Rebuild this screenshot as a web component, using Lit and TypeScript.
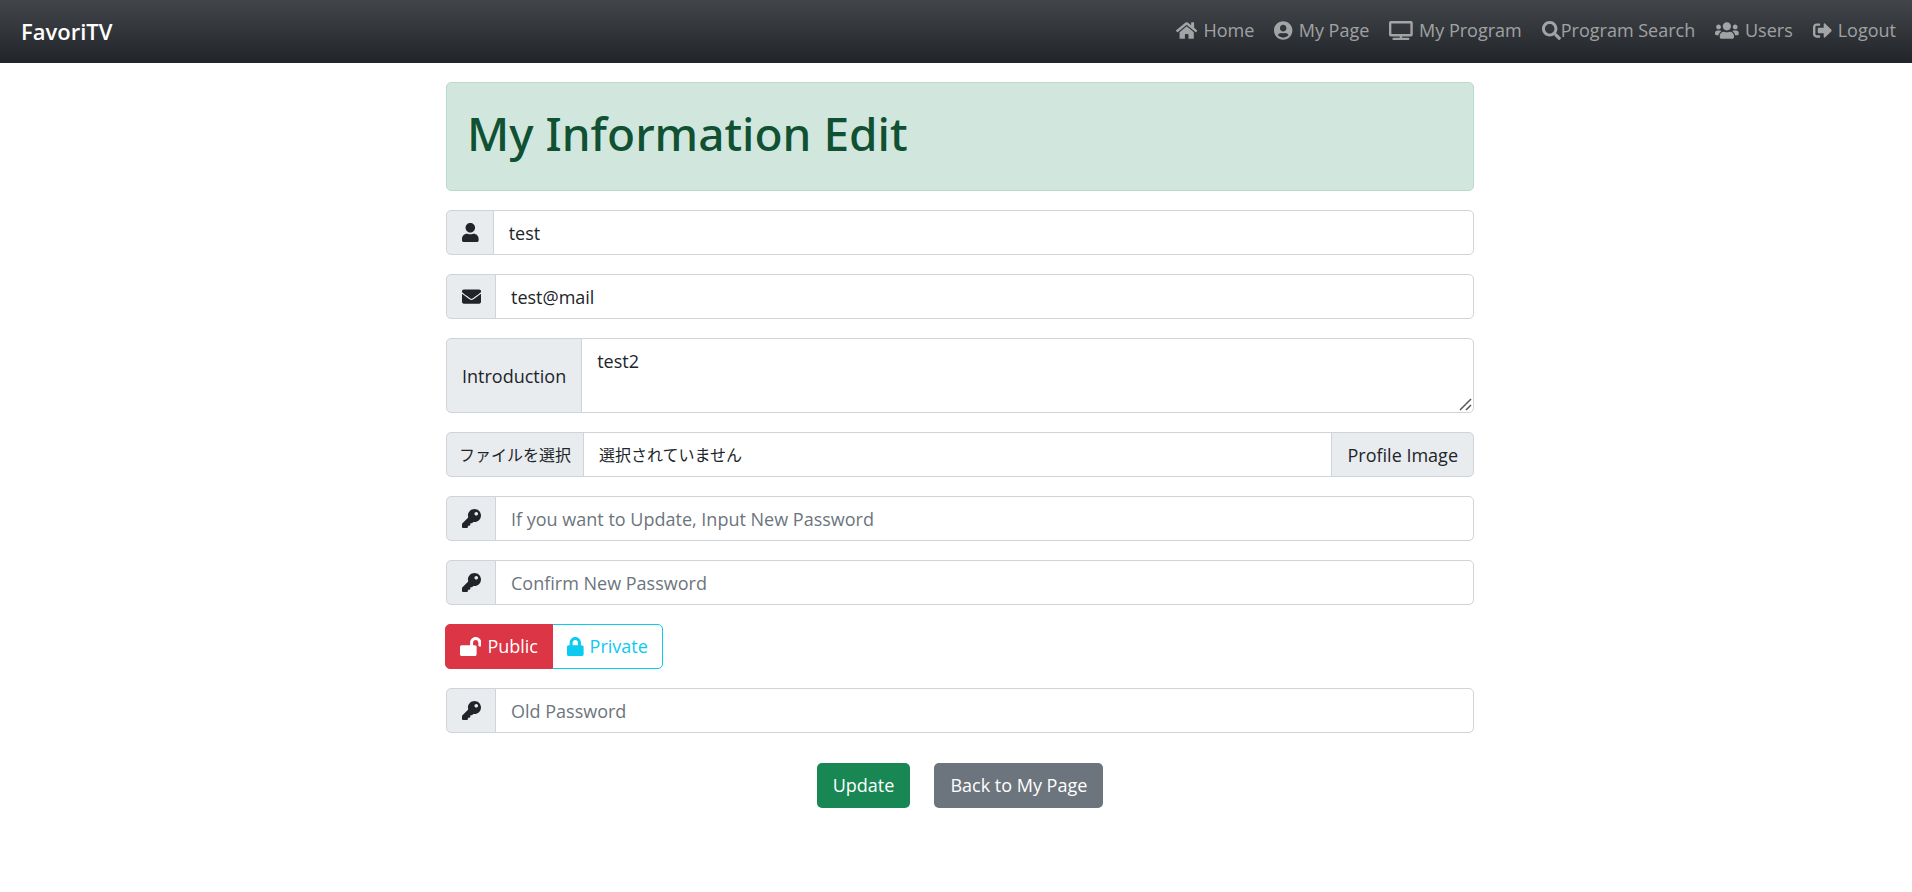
import { LitElement, html, css, svg } from "lit";
import { customElement, property, state } from "lit/decorators.js";

const ICONS: Record<string, [number, string]> = {
  home: [576, "M280.37 148.26L96 300.11V464a16 16 0 0 0 16 16l112.06-.29a16 16 0 0 0 15.92-16V368a16 16 0 0 1 16-16h64a16 16 0 0 1 16 16v95.64a16 16 0 0 0 16 16.05L464 480a16 16 0 0 0 16-16V300L295.67 148.26a12.19 12.19 0 0 0-15.3 0zM571.6 251.47L488 182.56V44.05a12 12 0 0 0-12-12h-56a12 12 0 0 0-12 12v72.61L318.47 43a48 48 0 0 0-61 0L4.34 251.47a12 12 0 0 0-1.6 16.9l25.5 31A12 12 0 0 0 45.15 301l235.22-193.74a12.19 12.19 0 0 1 15.3 0L530.9 301a12 12 0 0 0 16.9-1.6l25.5-31a12 12 0 0 0-1.7-16.93z"],
  account: [496, "M248 8C111 8 0 119 0 256s111 248 248 248 248-111 248-248S385 8 248 8zm0 96c48.6 0 88 39.4 88 88s-39.4 88-88 88-88-39.4-88-88 39.4-88 88-88zm0 344c-58.7 0-111.3-26.6-146.5-68.2 18.8-35.4 55.6-59.8 98.5-59.8 2.4 0 4.8.4 7.1 1.1 13 4.2 26.6 6.9 40.9 6.9 14.3 0 28-2.7 40.9-6.9 2.3-.7 4.7-1.1 7.1-1.1 42.9 0 79.7 24.4 98.5 59.8C359.3 421.4 306.7 448 248 448z"],
  tv: [640, "M592 0H48A48 48 0 0 0 0 48v320a48 48 0 0 0 48 48h240v32H112a16 16 0 0 0-16 16v32a16 16 0 0 0 16 16h416a16 16 0 0 0 16-16v-32a16 16 0 0 0-16-16H352v-32h240a48 48 0 0 0 48-48V48a48 48 0 0 0-48-48zm-16 352H64V64h512z"],
  search: [512, "M505 442.7L405.3 343c-4.5-4.5-10.6-7-17-7H372c27.6-35.3 44-79.7 44-128C416 93.1 322.9 0 208 0S0 93.1 0 208s93.1 208 208 208c48.3 0 92.7-16.4 128-44v16.3c0 6.4 2.5 12.5 7 17l99.7 99.7c9.4 9.4 24.6 9.4 33.9 0l28.3-28.3c9.4-9.4 9.4-24.6.1-34zM208 336c-70.7 0-128-57.2-128-128 0-70.7 57.2-128 128-128 70.7 0 128 57.2 128 128 0 70.7-57.2 128-128 128z"],
  users: [640, "M96 224c35.3 0 64-28.7 64-64s-28.7-64-64-64-64 28.7-64 64 28.7 64 64 64zm448 0c35.3 0 64-28.7 64-64s-28.7-64-64-64-64 28.7-64 64 28.7 64 64 64zm32 32h-64c-17.6 0-33.5 7.1-45.1 18.6 40.3 22.1 68.9 62 75.1 109.4h66c17.7 0 32-14.3 32-32v-32c0-35.3-28.7-64-64-64zm-256 0c61.9 0 112-50.1 112-112S381.9 32 320 32 208 82.1 208 144s50.1 112 112 112zm76.8 32h-8.3c-20.8 10-43.9 16-68.5 16s-47.6-6-68.5-16h-8.3C179.6 288 128 339.6 128 403.2V432c0 26.5 21.5 48 48 48h288c26.5 0 48-21.5 48-48v-28.8c0-63.6-51.6-115.2-115.2-115.2zm-223.7-13.4C161.5 263.1 145.6 256 128 256H64c-35.3 0-64 28.7-64 64v32c0 17.7 14.3 32 32 32h65.9c6.3-47.4 34.9-87.3 75.2-109.4z"],
  logout: [512, "M497 273L329 441c-15 15-41 4.5-41-17v-96H152c-13.3 0-24-10.7-24-24v-96c0-13.3 10.7-24 24-24h136V88c0-21.4 25.9-32 41-17l168 168c9.3 9.4 9.3 24.6 0 34zM192 436v-40c0-6.6-5.4-12-12-12H96c-17.7 0-32-14.3-32-32V160c0-17.7 14.3-32 32-32h84c6.6 0 12-5.4 12-12V76c0-6.6-5.4-12-12-12H96c-53 0-96 43-96 96v192c0 53 43 96 96 96h84c6.6 0 12-5.4 12-12z"],
  user: [448, "M224 256c70.7 0 128-57.3 128-128S294.7 0 224 0 96 57.3 96 128s57.3 128 128 128zm89.6 32h-16.7c-22.2 10.2-46.9 16-72.9 16s-50.6-5.8-72.9-16h-16.7C60.2 288 0 348.2 0 422.4V464c0 26.5 21.5 48 48 48h352c26.5 0 48-21.5 48-48v-41.6c0-74.2-60.2-134.4-134.4-134.4z"],
  envelope: [512, "M502.3 190.8c3.9-3.1 9.7-.2 9.7 4.7V400c0 26.5-21.5 48-48 48H48c-26.5 0-48-21.5-48-48V195.6c0-5 5.7-7.8 9.7-4.7 22.4 17.4 52.1 39.5 154.1 113.6 21.1 15.4 56.7 47.8 92.2 47.6 35.7.3 72-32.8 92.3-47.6 102-74.1 131.6-96.3 154-113.7zM256 320c23.2.4 56.6-29.2 73.4-41.4 132.7-96.3 142.8-104.7 173.4-128.7 5.8-4.5 9.2-11.5 9.2-18.9v-19c0-26.5-21.5-48-48-48H48c-26.5 0-48 21.5-48 48v19c0 7.4 3.4 14.3 9.2 18.9 30.6 23.9 40.7 32.4 173.4 128.7 16.8 12.2 50.2 41.8 73.4 41.4z"],
  key: [512, "M512 176.001C512 273.203 433.202 352 336 352c-11.22 0-22.19-1.062-32.827-3.069l-24.012 27.014A23.999 23.999 0 0 1 261.223 384H224v40c0 13.255-10.745 24-24 24h-40v40c0 13.255-10.745 24-24 24H24c-13.255 0-24-10.745-24-24v-78.059c0-6.365 2.529-12.47 7.029-16.971l161.802-161.802C163.108 213.814 160 195.271 160 176 160 78.798 238.797.001 335.999 0 433.488-.001 512 78.511 512 176.001zM336 128c0 26.51 21.49 48 48 48s48-21.49 48-48-21.49-48-48-48-48 21.49-48 48z"],
  unlock: [576, "M423.5 0C339.5.3 272 69.5 272 153.5V224H48c-26.5 0-48 21.5-48 48v192c0 26.5 21.5 48 48 48h352c26.5 0 48-21.5 48-48V272c0-26.5-21.5-48-48-48h-48v-71.1c0-39.6 31.7-72.5 71.3-72.9 40-.4 72.7 32.1 72.7 72v80c0 13.3 10.7 24 24 24h32c13.3 0 24-10.7 24-24v-80C576 68 507.5-.3 423.5 0z"],
  lock: [448, "M400 224h-24v-72C376 68.2 307.8 0 224 0S72 68.2 72 152v72H48c-26.5 0-48 21.5-48 48v192c0 26.5 21.5 48 48 48h352c26.5 0 48-21.5 48-48V272c0-26.5-21.5-48-48-48zm-104 0H152v-72c0-39.7 32.3-72 72-72s72 32.3 72 72v72z"],
};

@customElement("fa-icon")
class FaIcon extends LitElement {
  @property() name = "";

  static styles = css`
    :host { display: inline-flex; flex: none; }
    svg { display: block; height: 19px; width: auto; fill: currentColor; }
  `;

  render() {
    const [width, path] = ICONS[this.name];
    return html`<svg viewBox="0 0 ${width} 512" aria-hidden="true">${svg`<path d=${path}></path>`}</svg>`;
  }
}

@customElement("app-root")
class AppRoot extends LitElement {
  @state() private fileName = "選択されていません";

  static styles = css`
    :host {
      display: block;
      color: #212529;
      background: #fff;
      font-family: "Open Sans", "Noto Sans CJK JP", sans-serif;
      font-size: 18px;
      line-height: 29px;
    }
    * { box-sizing: border-box; }
    a { color: inherit; text-decoration: none; }

    .navbar {
      display: flex;
      flex-wrap: wrap;
      align-items: center;
      justify-content: space-between;
      min-height: 63px;
      padding: 0 16px 0 21px;
      background: #212529 linear-gradient(180deg, rgba(255, 255, 255, 0.15), rgba(255, 255, 255, 0));
    }
    .brand { color: #fff; font-size: 22px; font-weight: 600; }
    .nav {
      display: flex;
      flex-wrap: wrap;
      gap: 20px;
      margin: 0;
      padding: 0 0 2px;
      list-style: none;
      color: rgba(255, 255, 255, 0.55);
    }
    .nav a { display: flex; align-items: center; gap: 6px; }
    .nav .tight { gap: 0; }

    main {
      display: flex;
      flex-direction: column;
      gap: 19px;
      width: 55%;
      max-width: 1036px;
      margin: 19px auto 0;
      padding-left: 8px;
    }
    .banner {
      padding: 21px 20px 18px;
      border: 1px solid #badbcc;
      border-radius: 5px;
      color: #0f5132;
      background: #d1e7dd;
    }
    h1 { margin: 0 0 10px; font-family: "Noto Sans", sans-serif; font-size: 46px; font-weight: 500; line-height: 58px; }

    form { display: contents; }
    .group { display: flex; min-height: 45px; }
    .addon {
      display: flex;
      align-items: center;
      justify-content: center;
      padding: 0 14px 0 15px;
      border: 1px solid #ced4da;
      border-radius: 5px 0 0 5px;
      background: #e9ecef;
      white-space: nowrap;
    }
    .addon.text { padding: 2px 15px 0; }
    .addon.end { border-radius: 0 5px 5px 0; }
    .field {
      flex: 1;
      min-width: 0;
      margin: 0 0 0 -1px;
      padding: 8px 15px 6px;
      border: 1px solid #ced4da;
      border-radius: 0 5px 5px 0;
      color: inherit;
      background: #fff;
      font: inherit;
      outline: 0;
    }
    .field::placeholder { color: #6c757d; opacity: 1; }
    textarea.field { height: 75px; resize: vertical; }
    textarea.field::-webkit-resizer {
      background: url("data:image/svg+xml,%3Csvg xmlns='http://www.w3.org/2000/svg' viewBox='0 0 15 15'%3E%3Cpath d='M2 13 13 2M8 13l5-5' stroke='%23555' stroke-width='1.5'/%3E%3C/svg%3E") no-repeat center / 15px 15px;
    }

    .picker { display: flex; flex: 1; min-width: 0; font-size: 16px; cursor: pointer; }
    .picker .addon { width: 138px; }
    .picker .field { border-radius: 0; margin-right: -1px; }
    .hidden {
      position: absolute;
      width: 1px;
      height: 1px;
      margin: 0;
      opacity: 0;
      overflow: hidden;
    }

    .toggle { display: flex; margin: 0 0 0 -1px; padding: 0; border: 0; }
    .option {
      display: flex;
      align-items: center;
      gap: 6px;
      min-height: 45px;
      padding: 0 14px;
      border: 1px solid currentColor;
      cursor: pointer;
    }
    .public { color: #dc3545; border-radius: 5px 0 0 5px; }
    .private { margin-left: -1px; color: #0dcaf0; border-radius: 0 5px 5px 0; }
    :checked + .option { z-index: 1; }
    :checked + .public { color: #fff; background: #dc3545; border-color: #dc3545; }
    :checked + .private { color: #000; background: #0dcaf0; border-color: #0dcaf0; }
    .option { position: relative; }

    .actions { display: flex; justify-content: center; gap: 24px; margin-top: 11px; }
    .button {
      display: flex;
      align-items: center;
      min-height: 45px;
      padding: 0 16px;
      border: 0;
      border-radius: 5px;
      color: #fff;
      font: inherit;
      cursor: pointer;
    }
    .update { background: #198754; }
    .back { background: #6c757d; }
  `;

  private pick(e: Event) {
    const file = (e.target as HTMLInputElement).files?.[0];
    this.fileName = file ? file.name : "選択されていません";
  }

  private link(icon: string, text: string, tight = false) {
    return html`<li><a href="#" class=${tight ? "tight" : ""}><fa-icon name=${icon}></fa-icon><span>${text}</span></a></li>`;
  }

  private password(id: string, text: string) {
    return html`<div class="group">
      <label class="addon" for=${id} aria-label=${text}><fa-icon name="key"></fa-icon></label>
      <input class="field" id=${id} type="password" placeholder=${text} />
    </div>`;
  }

  render() {
    return html`
      <nav class="navbar">
        <a class="brand" href="#">FavoriTV</a>
        <ul class="nav">
          ${this.link("home", "Home")}
          ${this.link("account", "My Page")}
          ${this.link("tv", "My Program")}
          ${this.link("search", "Program Search", true)}
          ${this.link("users", "Users")}
          ${this.link("logout", "Logout")}
        </ul>
      </nav>
      <main>
        <div class="banner"><h1>My Information Edit</h1></div>
        <form @submit=${(e: Event) => e.preventDefault()}>
          <div class="group">
            <label class="addon" for="name" aria-label="Name"><fa-icon name="user"></fa-icon></label>
            <input class="field" id="name" type="text" value="test" />
          </div>
          <div class="group">
            <label class="addon" for="mail" aria-label="Mail"><fa-icon name="envelope"></fa-icon></label>
            <input class="field" id="mail" type="text" value="test@mail" />
          </div>
          <div class="group">
            <label class="addon text" for="intro">Introduction</label>
            <textarea class="field" id="intro" rows="2" .value=${"test2"}></textarea>
          </div>
          <div class="group">
            <input class="hidden" id="image" type="file" @change=${this.pick} />
            <label class="picker" for="image">
              <span class="addon text">ファイルを選択</span>
              <span class="field">${this.fileName}</span>
            </label>
            <label class="addon text end" for="image">Profile Image</label>
          </div>
          ${this.password("new-password", "If you want to Update, Input New Password")}
          ${this.password("confirm-password", "Confirm New Password")}
          <fieldset class="toggle" aria-label="Visibility">
            <input class="hidden" type="radio" name="visibility" id="public" checked />
            <label class="option public" for="public"><fa-icon name="unlock"></fa-icon>Public</label>
            <input class="hidden" type="radio" name="visibility" id="private" />
            <label class="option private" for="private"><fa-icon name="lock"></fa-icon>Private</label>
          </fieldset>
          ${this.password("old-password", "Old Password")}
          <div class="actions">
            <button class="button update" type="submit">Update</button>
            <a class="button back" href="#">Back to My Page</a>
          </div>
        </form>
      </main>
    `;
  }
}
